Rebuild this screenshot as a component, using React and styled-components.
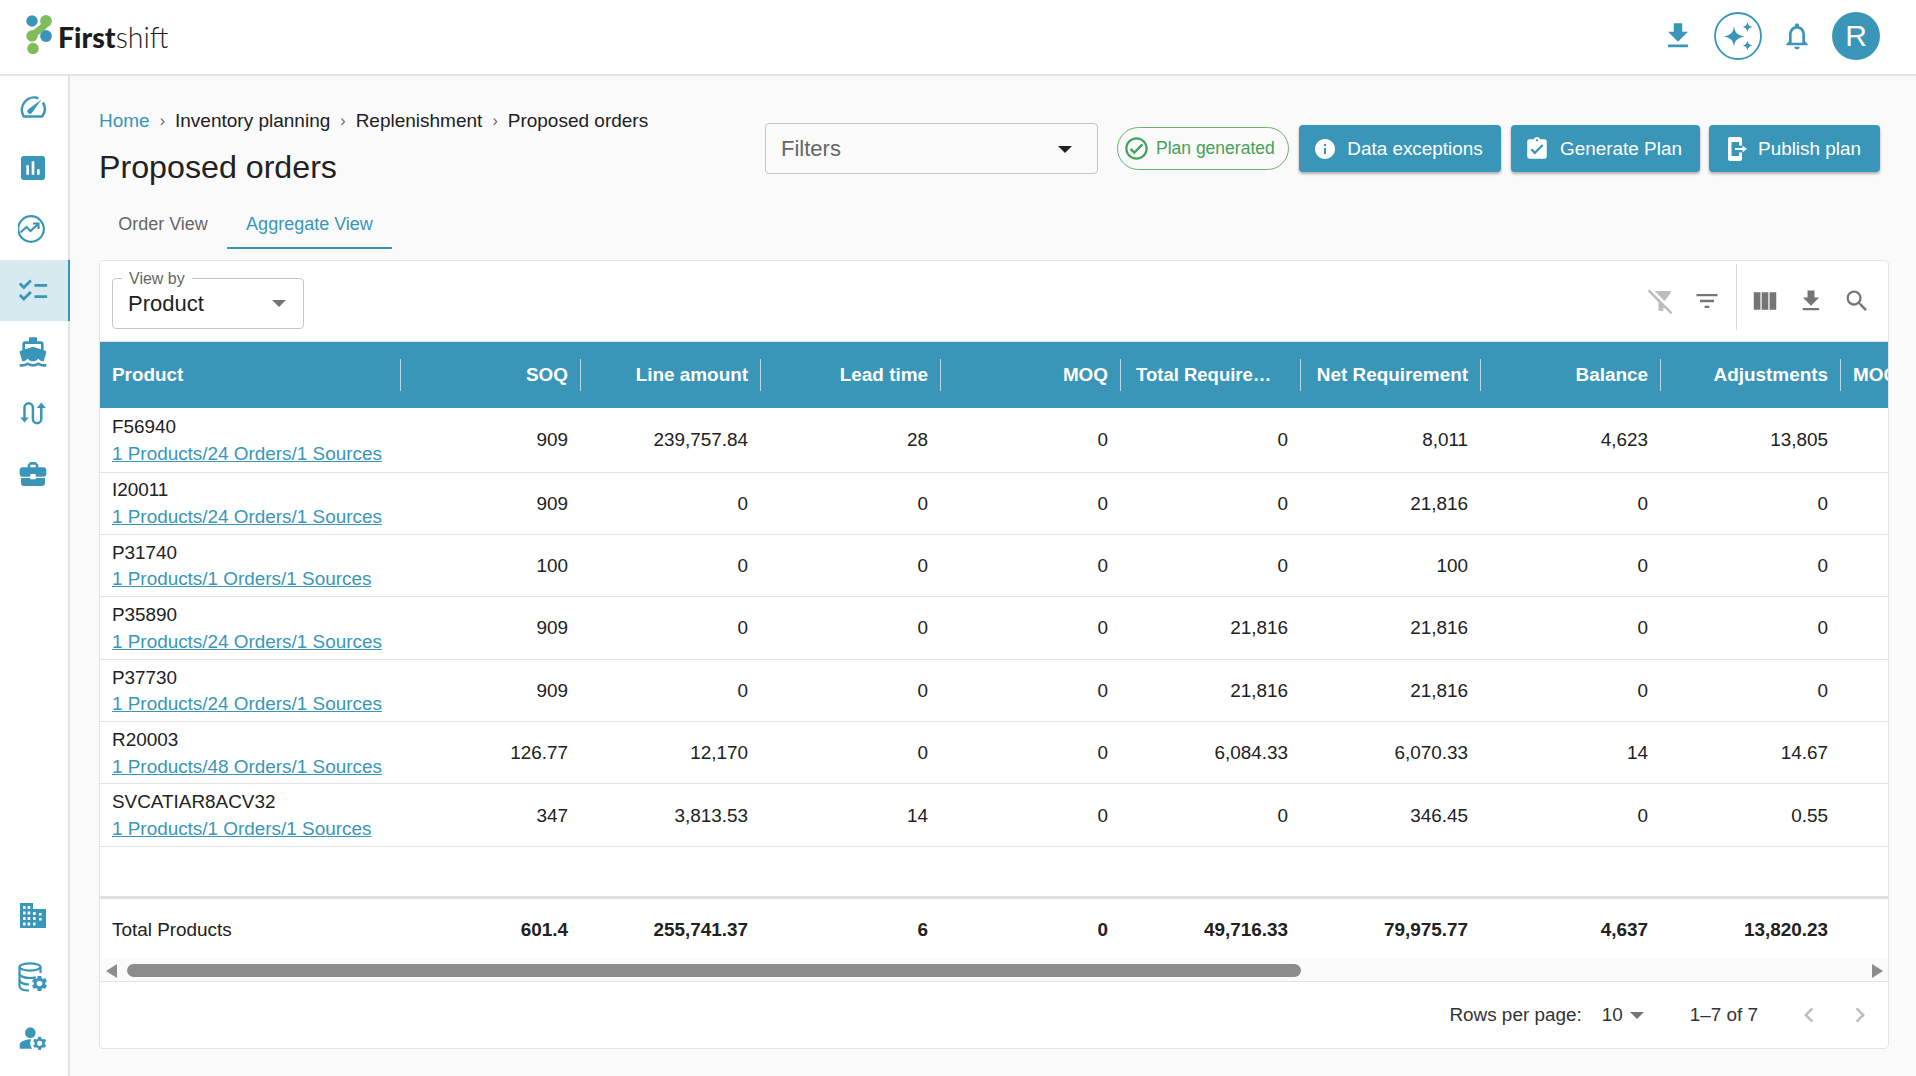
import React from "react";
import styled, { createGlobalStyle } from "styled-components";
import {
  MdAssessment,
  MdBusinessCenter,
  MdChecklist,
  MdChevronLeft,
  MdChevronRight,
  MdDirectionsBoat,
  MdFileDownload,
  MdFilterAltOff,
  MdFilterList,
  MdInfo,
  MdManageAccounts,
  MdOutlineCheckCircle,
  MdOutlineNotifications,
  MdSearch,
  MdViewColumn,
  MdAssignmentTurnedIn,
} from "react-icons/md";

const BLUE = "#3996b9";

const GEAR =
  "M19.14 12.94c.04-.3.06-.61.06-.94 0-.32-.02-.64-.07-.94l2.03-1.58c.18-.14.23-.41.12-.61l-1.92-3.32c-.12-.22-.37-.29-.59-.22l-2.39.96c-.5-.38-1.03-.7-1.62-.94l-.36-2.54c-.04-.24-.24-.41-.48-.41h-3.84c-.24 0-.43.17-.47.41l-.36 2.54c-.59.24-1.13.57-1.62.94l-2.39-.96c-.22-.08-.47 0-.59.22L2.74 8.87c-.12.21-.08.47.12.61l2.03 1.58c-.05.3-.09.63-.09.94s.02.64.07.94l-2.03 1.58c-.18.14-.23.41-.12.61l1.92 3.32c.12.22.37.29.59.22l2.39-.96c.5.38 1.03.7 1.62.94l.36 2.54c.05.24.24.41.48.41h3.84c.24 0 .44-.17.47-.41l.36-2.54c.59-.24 1.13-.56 1.62-.94l2.39.96c.22.08.47 0 .59-.22l1.92-3.32c.12-.22.07-.47-.12-.61l-2.01-1.58zM12 15.6c-1.98 0-3.6-1.62-3.6-3.6s1.62-3.6 3.6-3.6 3.6 1.62 3.6 3.6-1.62 3.6-3.6 3.6z";

const Logo = () => (
  <svg width="26" height="40" viewBox="0 0 26 40">
    <path d="M20 7 C18 14 12 14 6 21" stroke="#7fbc5a" strokeWidth="7" fill="none" />
    <circle cx="6" cy="6" r="5.7" fill={BLUE} />
    <circle cx="20" cy="6" r="5.9" fill="#7fbc5a" />
    <circle cx="20" cy="21" r="5.9" fill={BLUE} />
    <circle cx="6" cy="21" r="5.7" fill="#7fbc5a" />
    <circle cx="7" cy="33.5" r="5.7" fill="#7fbc5a" />
  </svg>
);

const GaugeIcon = () => (
  <svg width="28" height="24" viewBox="0 0 28 24" fill="none">
    <path
      d="M4.4 20.8 A12.4 12.4 0 0 1 19.5 3.2 M24 7.5 A12.4 12.4 0 0 1 23.6 20.8 A1 1 0 0 1 23 21.5 H5 A1 1 0 0 1 4.4 20.8"
      stroke={BLUE}
      strokeWidth="2.5"
    />
    <path d="M9 14.5 L22.5 4.5 L13 17.8 A2.4 2.4 0 0 1 9 14.5 Z" fill={BLUE} />
  </svg>
);

const TrendIcon = () => (
  <svg width="30" height="30" viewBox="2 0 30 30" fill="none" stroke={BLUE} strokeWidth="2.2">
    <circle cx="15" cy="15" r="12.8" />
    <path d="M4.5 18.5 L10.5 13 L14.5 17 L21.5 10.5" />
    <path d="M17 9.5 H22.5 V15" />
  </svg>
);

const RouteIcon = () => (
  <svg width="28" height="28" viewBox="0 0 28 28" fill="none" stroke={BLUE} strokeWidth="2.5">
    <path d="M7 21 V8.5 a4.2 4.2 0 0 1 8.4 0 V20 a4.2 4.2 0 0 0 8.4 0 V7" transform="translate(-1.5 0)" />
    <path d="M1.2 18.5 L5.5 23.5 L9.8 18.5 Z" fill={BLUE} stroke="none" />
    <path d="M17.8 9 L22.3 3.5 L26.8 9 Z" fill={BLUE} stroke="none" />
  </svg>
);

const BuildingIcon = () => (
  <svg width="28" height="26" viewBox="0 0 28 26" fill={BLUE}>
    <path
      fillRule="evenodd"
      d="M1 0 H14 V6 H27 V25 H1 Z M4 3 v3 h2.6 v-3 z M8.6 3 v3 h2.6 v-3 z M4 8.5 v3 h2.6 v-3 z M8.6 8.5 v3 h2.6 v-3 z M4 14 v3 h2.6 v-3 z M8.6 14 v3 h2.6 v-3 z M4 19.5 v3 h2.6 v-3 z M8.6 19.5 v3 h2.6 v-3 z M14 9 h2.6 v3 h-2.6 z M14 14 h2.6 v3 h-2.6 z M14 19.5 h2.6 v3 h-2.6 z M20 10 h2.6 v2.6 h-2.6 z M20 15 h2.6 v2.6 h-2.6 z"
    />
  </svg>
);

const DatabaseIcon = () => (
  <svg width="32" height="32" viewBox="0 0 32 32" fill="none">
    <g stroke={BLUE} strokeWidth="2.2">
      <ellipse cx="13" cy="6" rx="10.5" ry="3.6" />
      <path d="M2.5 6 V25 C2.5 28 7 29.5 12 29.5" />
      <path d="M23.5 6 V12" />
      <path d="M2.5 12.5 C2.5 15.5 8 17 13 17 C15 17 17 16.8 19 16.2" />
      <path d="M2.5 19 C2.5 22 8 23.5 12 23.5" />
    </g>
    <svg x="13" y="13" width="19" height="19" viewBox="0 0 24 24">
      <path d={GEAR} fill={BLUE} />
    </svg>
  </svg>
);

const SparkleCircle = () => (
  <svg width="48" height="48" viewBox="0 0 48 48" fill={BLUE}>
    <circle cx="24" cy="24" r="23" fill="none" stroke={BLUE} strokeWidth="1.8" />
    <path d="M20 14 C21 21 23 23 31 24.5 C23 26 21 28 20 35 C19 28 17 26 9.5 24.5 C17 23 19 21 20 14 Z" />
    <path d="M33.5 9.5 C34 13 35 14.3 38.8 15 C35 15.7 34 17 33.5 20.5 C33 17 32 15.7 28.3 15 C32 14.3 33 13 33.5 9.5 Z" />
    <path d="M33.5 28 C34 31.5 35 32.8 38.8 33.5 C35 34.2 34 35.5 33.5 39 C33 35.5 32 34.2 28.3 33.5 C32 32.8 33 31.5 33.5 28 Z" />
  </svg>
);

const PublishIcon = () => (
  <svg width="19" height="24" viewBox="0 0 19 24" fill="#fff">
    <path d="M2 0 H12 a2 2 0 0 1 2 2 V8.5 H11 V5 H3.5 V19 H11 V15.5 H14 V22 a2 2 0 0 1 -2 2 H2 a2 2 0 0 1 -2 -2 V2 a2 2 0 0 1 2 -2 Z" />
    <path d="M7 11 H14.5 V8.8 L19 12 L14.5 15.2 V13 H7 Z" />
  </svg>
);

const GlobalStyle = createGlobalStyle`
  html, body {
    margin: 0;
    background: #fafafa;
    font-family: "Liberation Sans", Arial, sans-serif;
    color: #212121;
  }
  * { box-sizing: border-box; }
`;

const Page = styled.div`
  width: 1916px;
  height: 1076px;
  display: flex;
  flex-direction: column;
  overflow: hidden;
`;

const TopBar = styled.header`
  height: 76px;
  flex: none;
  background: #fff;
  border-bottom: 2px solid #e3e3e3;
  display: flex;
  align-items: center;
  justify-content: space-between;
  padding: 0 36px 3px 26px;
`;

const Brand = styled.div`
  display: flex;
  align-items: center;
  gap: 6px;
  margin-top: -1px;
`;

const BrandName = styled.div`
  font-family: Lato, sans-serif;
  font-size: 28.5px;
  font-weight: 300;
  color: #1c1c1c;
  margin-top: 3px;
  b {
    font-weight: 900;
  }
`;

const TopActions = styled.div`
  display: flex;
  align-items: center;
  color: ${BLUE};
  gap: 19px;
`;

const Avatar = styled.div`
  width: 48px;
  height: 48px;
  border-radius: 50%;
  background: ${BLUE};
  color: #fff;
  font-size: 30px;
  display: flex;
  align-items: center;
  justify-content: center;
`;

const Body = styled.div`
  flex: 1;
  display: flex;
  min-height: 0;
`;

const Sidebar = styled.nav`
  width: 70px;
  flex: none;
  background: #fff;
  border-right: 2px solid #e3e3e3;
  display: flex;
  flex-direction: column;
  justify-content: space-between;
  padding-bottom: 7px;
`;

const NavGroup = styled.div`
  display: flex;
  flex-direction: column;
`;

const NavItem = styled.div`
  height: 61.3px;
  display: flex;
  align-items: center;
  justify-content: center;
  color: ${BLUE};
  padding-right: 2px;
  background: ${(p) => (p.$active ? "#d6eaf0" : "transparent")};
  border-right: 2px solid ${(p) => (p.$active ? BLUE : "transparent")};
  margin-right: -2px;
`;

const Main = styled.main`
  flex: 1;
  min-width: 0;
  padding: 29px 28px 0 29px;
  display: flex;
  flex-direction: column;
`;

const PageHead = styled.div`
  display: flex;
  justify-content: space-between;
  height: 91px;
`;

const TitleBlock = styled.div`
  display: flex;
  flex-direction: column;
`;

const Crumbs = styled.div`
  display: flex;
  align-items: center;
  font-size: 19px;
  line-height: 30px;
  height: 30px;
  margin-top: 1px;
`;

const Crumb = styled.span`
  color: ${(p) => (p.$link ? BLUE : "#212121")};
`;

const CrumbSep = styled.span`
  color: #666;
  font-size: 16px;
  margin: 0 10px;
`;

const Title = styled.h1`
  margin: 11px 0 0;
  font-size: 32.2px;
  line-height: 40px;
  font-weight: 400;
`;

const HeadActions = styled.div`
  display: flex;
  align-items: flex-start;
  padding: 18px 8px 0 0;
`;

const FilterSelect = styled.div`
  width: 333px;
  height: 51px;
  border: 1px solid #c4c4c4;
  border-radius: 4px;
  display: flex;
  align-items: center;
  justify-content: space-between;
  padding: 1px 25px 0 15px;
  font-size: 22px;
  color: #666;
  margin-right: 19px;
`;

const CaretDown = styled.i`
  display: block;
  width: 0;
  height: 0;
  border-left: ${(p) => p.$size || 7}px solid transparent;
  border-right: ${(p) => p.$size || 7}px solid transparent;
  border-top: ${(p) => p.$size || 7}px solid ${(p) => p.$color || "#212121"};
`;

const StatusChip = styled.div`
  height: 43px;
  width: 172px;
  margin: 4px 10px 0 0;
  border: 1px solid #69b36b;
  border-radius: 22px;
  display: flex;
  align-items: center;
  gap: 6px;
  padding-left: 5px;
  font-size: 17.5px;
  color: #43a257;
  white-space: nowrap;
`;

const ActionButton = styled.button`
  height: 47px;
  width: ${(p) => p.$width}px;
  margin: 2px 0 0 ${(p) => p.$gap || 0}px;
  padding: 0 ${(p) => p.$shift || 0}px 0 0;
  border: none;
  border-radius: 4px;
  background: ${BLUE};
  color: #fff;
  font-family: inherit;
  font-size: 18.9px;
  display: flex;
  align-items: center;
  justify-content: center;
  gap: ${(p) => p.$iconGap || 10}px;
  box-shadow: 0 2px 3px rgba(0, 0, 0, 0.3);
  white-space: nowrap;
`;

const Tabs = styled.div`
  display: flex;
  height: 53px;
  padding-top: 5px;
  margin-bottom: 11px;
`;

const Tab = styled.div`
  padding: 0 19px;
  width: ${(p) => p.$width}px;
  display: flex;
  align-items: center;
  justify-content: center;
  font-size: 18px;
  color: ${(p) => (p.$active ? BLUE : "#666")};
  border-bottom: 2px solid ${(p) => (p.$active ? BLUE : "transparent")};
`;

const Card = styled.section`
  width: 1790px;
  height: 789px;
  background: #fff;
  border: 1px solid #e3e3e3;
  border-radius: 4px;
  display: flex;
  flex-direction: column;
  overflow: hidden;
`;

const Toolbar = styled.div`
  height: 81px;
  flex: none;
  display: flex;
  align-items: center;
  justify-content: space-between;
  padding: 0 8px 0 12px;
  border-bottom: 1px solid #e3e3e3;
`;

const ViewBy = styled.div`
  position: relative;
  width: 192px;
  height: 51px;
  margin-top: 5px;
  border: 1px solid #c4c4c4;
  border-radius: 4px;
  display: flex;
  align-items: center;
  justify-content: space-between;
  padding: 0 17px 0 15px;
  font-size: 22px;
`;

const ViewByLabel = styled.span`
  position: absolute;
  left: 9px;
  top: -8px;
  padding: 0 7px;
  background: #fff;
  font-size: 16px;
  line-height: 16px;
  color: #666;
`;

const Tools = styled.div`
  display: flex;
  align-items: center;
  height: 66px;
  margin-top: -1px;
`;

const ToolBtn = styled.div`
  width: 46px;
  display: flex;
  justify-content: center;
  color: ${(p) => (p.$disabled ? "#bdbdbd" : "#757575")};
`;

const ToolDivider = styled.div`
  width: 1px;
  height: 66px;
  background: #dcdcdc;
  margin: -7px 5px 0 6px;
`;

const TableWrap = styled.div`
  width: 100%;
  overflow: hidden;
  flex: none;
`;

const Grid = styled.table`
  width: 1921px;
  table-layout: fixed;
  border-collapse: collapse;
`;

const HeadCell = styled.th`
  position: relative;
  height: 66px;
  padding: ${(p) => (p.$left ? "0 0 0 12px" : "0 13px 0 0")};
  background: ${BLUE};
  color: #fff;
  font-size: 18.9px;
  font-weight: 700;
  text-align: ${(p) => (p.$left ? "left" : "right")};
  white-space: nowrap;
  overflow: hidden;
  &::after {
    content: "";
    position: absolute;
    right: 0;
    top: 17px;
    height: 32px;
    width: 1.5px;
    background: ${(p) => (p.$last ? "transparent" : "#b9d8e4")};
  }
`;

const Clipped = styled.span`
  display: inline-block;
  max-width: 138px;
  overflow: hidden;
  text-overflow: ellipsis;
  vertical-align: bottom;
  margin-right: 14px;
  font-size: 18.5px;
`;

const Row = styled.tr`
  height: 62.4px;
  border-bottom: 1.5px solid #e3e3e3;
  &:first-child {
    height: 64px;
  }
`;

const Cell = styled.td`
  padding: ${(p) => (p.$left ? "1.5px 0 0 12px" : "1.5px 13px 0 0")};
  font-size: 18.9px;
  line-height: 26.5px;
  color: #212121;
  text-align: ${(p) => (p.$left ? "left" : "right")};
  white-space: nowrap;
`;

const RowLink = styled.a`
  display: block;
  color: ${BLUE};
  text-decoration: underline;
`;

const SpacerRow = styled.tr`
  height: 51.6px;
  border-bottom: 3px solid #e0e0e0;
`;

const TotalRow = styled.tr`
  height: 61.5px;
`;

const TotalCell = styled(Cell)`
  font-weight: ${(p) => (p.$left ? 400 : 700)};
`;

const Scroller = styled.div`
  height: 23px;
  flex: none;
  background: #fafafa;
  border-bottom: 1px solid #e3e3e3;
  display: flex;
  align-items: center;
  padding: 1px 5px 0 6px;
`;

const ArrowLeft = styled.i`
  width: 0;
  height: 0;
  border-top: 7px solid transparent;
  border-bottom: 7px solid transparent;
  border-right: 11px solid #8c8c8c;
`;

const ArrowRight = styled.i`
  width: 0;
  height: 0;
  margin-left: auto;
  border-top: 7px solid transparent;
  border-bottom: 7px solid transparent;
  border-left: 11px solid #8c8c8c;
`;

const Thumb = styled.div`
  width: 1174px;
  height: 13px;
  margin-left: 10px;
  border-radius: 7px;
  background: #8c8c8c;
`;

const Pager = styled.div`
  flex: 1;
  display: flex;
  align-items: center;
  justify-content: flex-end;
  font-size: 18.9px;
  color: #333;
  padding-right: 3px;
`;

const RowsValue = styled.div`
  display: flex;
  align-items: center;
  gap: 7px;
  margin: 0 46px 0 20px;
`;

const PagerRange = styled.span`
  margin-right: 25px;
`;

const PagerBtn = styled.div`
  width: 51px;
  display: flex;
  justify-content: center;
  color: #bdbdbd;
`;

const columns = [
  "SOQ",
  "Line amount",
  "Lead time",
  "MOQ",
  "Total Requirement",
  "Net Requirement",
  "Balance",
  "Adjustments",
];

const rows = [
  ["F56940", "1 Products/24 Orders/1 Sources", "909", "239,757.84", "28", "0", "0", "8,011", "4,623", "13,805"],
  ["I20011", "1 Products/24 Orders/1 Sources", "909", "0", "0", "0", "0", "21,816", "0", "0"],
  ["P31740", "1 Products/1 Orders/1 Sources", "100", "0", "0", "0", "0", "100", "0", "0"],
  ["P35890", "1 Products/24 Orders/1 Sources", "909", "0", "0", "0", "21,816", "21,816", "0", "0"],
  ["P37730", "1 Products/24 Orders/1 Sources", "909", "0", "0", "0", "21,816", "21,816", "0", "0"],
  ["R20003", "1 Products/48 Orders/1 Sources", "126.77", "12,170", "0", "0", "6,084.33", "6,070.33", "14", "14.67"],
  ["SVCATIAR8ACV32", "1 Products/1 Orders/1 Sources", "347", "3,813.53", "14", "0", "0", "346.45", "0", "0.55"],
];

const totals = ["601.4", "255,741.37", "6", "0", "49,716.33", "79,975.77", "4,637", "13,820.23"];

function App() {
  return (
    <Page>
      <GlobalStyle />
      <TopBar>
        <Brand>
          <Logo />
          <BrandName>
            <b>First</b>shift
          </BrandName>
        </Brand>
        <TopActions>
          <MdFileDownload size={34} />
          <SparkleCircle />
          <MdOutlineNotifications size={32} />
          <Avatar>R</Avatar>
        </TopActions>
      </TopBar>
      <Body>
        <Sidebar>
          <NavGroup>
            <NavItem><GaugeIcon /></NavItem>
            <NavItem><MdAssessment size={32} /></NavItem>
            <NavItem><TrendIcon /></NavItem>
            <NavItem $active><MdChecklist size={34} /></NavItem>
            <NavItem><MdDirectionsBoat size={32} /></NavItem>
            <NavItem><RouteIcon /></NavItem>
            <NavItem><MdBusinessCenter size={32} /></NavItem>
          </NavGroup>
          <NavGroup>
            <NavItem><BuildingIcon /></NavItem>
            <NavItem><DatabaseIcon /></NavItem>
            <NavItem><MdManageAccounts size={32} /></NavItem>
          </NavGroup>
        </Sidebar>
        <Main>
          <PageHead>
            <TitleBlock>
              <Crumbs>
                <Crumb $link>Home</Crumb>
                <CrumbSep>›</CrumbSep>
                <Crumb>Inventory planning</Crumb>
                <CrumbSep>›</CrumbSep>
                <Crumb>Replenishment</Crumb>
                <CrumbSep>›</CrumbSep>
                <Crumb>Proposed orders</Crumb>
              </Crumbs>
              <Title>Proposed orders</Title>
            </TitleBlock>
            <HeadActions>
              <FilterSelect>
                Filters
                <CaretDown />
              </FilterSelect>
              <StatusChip>
                <MdOutlineCheckCircle size={27} />
                Plan generated
              </StatusChip>
              <ActionButton $width={202} $shift={4}>
                <MdInfo size={24} />
                Data exceptions
              </ActionButton>
              <ActionButton $width={189} $gap={10} $shift={5}>
                <MdAssignmentTurnedIn size={26} />
                Generate Plan
              </ActionButton>
              <ActionButton $width={171} $gap={9} $iconGap={11}>
                <PublishIcon />
                Publish plan
              </ActionButton>
            </HeadActions>
          </PageHead>
          <Tabs>
            <Tab $width={128}>Order View</Tab>
            <Tab $width={165} $active>Aggregate View</Tab>
          </Tabs>
          <Card>
            <Toolbar>
              <ViewBy>
                <ViewByLabel>View by</ViewByLabel>
                Product
                <CaretDown $color="#757575" />
              </ViewBy>
              <Tools>
                <ToolBtn $disabled><MdFilterAltOff size={30} /></ToolBtn>
                <ToolBtn><MdFilterList size={28} /></ToolBtn>
                <ToolDivider />
                <ToolBtn><MdViewColumn size={30} /></ToolBtn>
                <ToolBtn><MdFileDownload size={28} /></ToolBtn>
                <ToolBtn><MdSearch size={28} /></ToolBtn>
              </Tools>
            </Toolbar>
            <TableWrap>
              <Grid>
                <colgroup>
                  <col style={{ width: 301 }} />
                  {columns.map((c) => <col key={c} style={{ width: 180 }} />)}
                  <col style={{ width: 180 }} />
                </colgroup>
                <thead>
                  <tr>
                    <HeadCell $left>Product</HeadCell>
                    {columns.map((c) => (
                      <HeadCell key={c}>
                        {c === "Total Requirement" ? <Clipped>{c}</Clipped> : c}
                      </HeadCell>
                    ))}
                    <HeadCell $left $last>MOQ Adjustment</HeadCell>
                  </tr>
                </thead>
                <tbody>
                  {rows.map(([name, link, ...values]) => (
                    <Row key={name}>
                      <Cell $left>
                        {name}
                        <RowLink>{link}</RowLink>
                      </Cell>
                      {values.map((v, i) => <Cell key={i}>{v}</Cell>)}
                      <Cell />
                    </Row>
                  ))}
                  <SpacerRow>
                    <Cell colSpan={10} />
                  </SpacerRow>
                  <TotalRow>
                    <TotalCell $left>Total Products</TotalCell>
                    {totals.map((v, i) => <TotalCell key={i}>{v}</TotalCell>)}
                    <TotalCell />
                  </TotalRow>
                </tbody>
              </Grid>
            </TableWrap>
            <Scroller>
              <ArrowLeft />
              <Thumb />
              <ArrowRight />
            </Scroller>
            <Pager>
              Rows per page:
              <RowsValue>
                10
                <CaretDown $size={7} $color="#757575" />
              </RowsValue>
              <PagerRange>1–7 of 7</PagerRange>
              <PagerBtn><MdChevronLeft size={30} /></PagerBtn>
              <PagerBtn><MdChevronRight size={30} /></PagerBtn>
            </Pager>
          </Card>
        </Main>
      </Body>
    </Page>
  );
}

export default App;
